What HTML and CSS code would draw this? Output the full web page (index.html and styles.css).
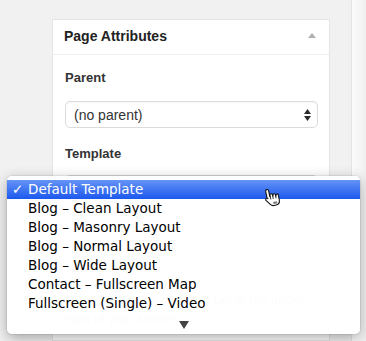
FILE: index.html
```html
<!DOCTYPE html>
<html>
<head>
<meta charset="utf-8">
<link rel="stylesheet" href="styles.css">
</head>
<body>
<div class="page">
  <div class="main">
    <div class="postbox">
      <div class="hndle">
        <h2 class="title">Page Attributes</h2>
        <span class="toggle"></span>
      </div>
      <div class="inside">
        <p class="label label-first">Parent</p>
        <div class="select">
          <span class="value">(no parent)</span>
          <svg class="arrows" width="7" height="12" viewBox="0 0 7 12"><path d="M3.5 0 L7 5 H0 Z M0 7 H7 L3.5 12 Z" fill="#2b2b2b"/></svg>
        </div>
        <p class="label label-second">Template</p>
        <div class="select select-template">
          <span class="value">Default Template</span>
          <svg class="arrows" width="7" height="12" viewBox="0 0 7 12"><path d="M3.5 0 L7 5 H0 Z M0 7 H7 L3.5 12 Z" fill="#2b2b2b"/></svg>
        </div>
        <p class="help">Need help? Use the Help tab in the upper right of your screen.</p>
      </div>
    </div>
  </div>
  <div class="side"></div>
</div>

<div class="menu">
  <div class="item selected"><span class="check">✓</span><span class="text">Default Template</span></div>
  <div class="item"><span class="check"></span><span class="text">Blog – Clean Layout</span></div>
  <div class="item"><span class="check"></span><span class="text">Blog – Masonry Layout</span></div>
  <div class="item"><span class="check"></span><span class="text">Blog – Normal Layout</span></div>
  <div class="item"><span class="check"></span><span class="text">Blog – Wide Layout</span></div>
  <div class="item"><span class="check"></span><span class="text">Contact – Fullscreen Map</span></div>
  <div class="item"><span class="check"></span><span class="text">Fullscreen (Single) – Video</span></div>
  <div class="more"><span class="down"></span></div>
</div>

<svg class="cursor" width="20" height="21" viewBox="0 0 20 21">
  <g transform="rotate(-12 10 10)">
    <path d="M5.5 1.5 C6.4 1.5 7 2.1 7 3 V9 H7.4 V7.6 C7.4 6.9 8 6.4 8.7 6.4 C9.4 6.4 9.9 6.9 9.9 7.6 V9 H10.3 V8.2 C10.3 7.5 10.9 7 11.6 7 C12.3 7 12.8 7.5 12.8 8.2 V9.5 H13.2 V9 C13.2 8.3 13.8 7.8 14.4 7.8 C15.1 7.8 15.6 8.3 15.6 9 V13.5 C15.6 16.2 14.1 18.5 11.6 18.5 H9 C7.5 18.5 6.6 17.8 5.8 16.7 L2.6 12.2 C2.1 11.5 2.3 10.6 2.9 10.2 C3.5 9.8 4.3 10 4.7 10.6 L4 9.6 V3 C4 2.1 4.6 1.5 5.5 1.5 Z" fill="#fff" stroke="#111" stroke-width="1.1" stroke-linejoin="round"/>
    <path d="M9 15 H13 V17 H9 Z" fill="#777"/>
    <path d="M7.4 9 V12 M9.9 9 V12 M12.8 9.5 V12" stroke="#111" stroke-width="0.8"/>
  </g>
</svg>
</body>
</html>
```

FILE: styles.css
```css
html, body {
  margin: 0;
  padding: 0;
}

body {
  background: #f1f1f1;
  width: 366px;
  height: 341px;
  overflow: hidden;
  position: relative;
  font-family: "Liberation Sans", Arial, sans-serif;
  color: #444;
}

.page {
  display: flex;
  height: 341px;
  overflow: hidden;
}

.main {
  width: 351px;
  flex: none;
}

.side {
  flex: 1;
  border-left: 1px solid #e4e4e4;
  background: linear-gradient(to right, #fbfbfb, #f4f4f4 70%, #efefef);
}

.postbox {
  margin: 19px 0 0 52px;
  width: 278px;
  background: #fff;
  border: 1px solid #e5e5e5;
  height: 322px;
  box-sizing: border-box;
  overflow: hidden;
}

.hndle {
  display: flex;
  align-items: center;
  justify-content: space-between;
  padding: 8px 13px 10px 11px;
  border-bottom: 1px solid #eeeeee;
}

.title {
  margin: 0;
  font-size: 14px;
  line-height: 16px;
  font-weight: bold;
  color: #222;
}

.toggle {
  width: 0;
  height: 0;
  border-left: 4px solid transparent;
  border-right: 4px solid transparent;
  border-bottom: 5px solid #b0b0b0;
  margin-top: -1px;
}

.inside {
  padding: 0 11px 0 12px;
}

.label {
  margin: 0;
  font-size: 13px;
  line-height: 15px;
  font-weight: bold;
  color: #333;
}

.label-first {
  margin-top: 15px;
  margin-bottom: 16px;
}

.label-second {
  margin-top: 18px;
  margin-bottom: 14px;
}

.select {
  height: 25px;
  border: 1px solid #dcdcdc;
  border-radius: 5px;
  display: flex;
  align-items: center;
  justify-content: space-between;
  padding: 0 6px 0 8px;
  box-shadow: inset 0 1px 2px rgba(0,0,0,0.04);
}

.value {
  font-size: 14px;
  color: #333;
}

.arrows {
  display: block;
}

.help {
  margin: 88px 0 0 0;
  font-size: 13px;
  line-height: 19px;
  color: #666;
}

.menu {
  position: absolute;
  left: 7px;
  top: 176px;
  width: 353px;
  height: 158px;
  box-sizing: border-box;
  padding-top: 4px;
  background: rgba(255,255,255,0.975);
  border-radius: 5px;
  box-shadow: 0 4px 14px rgba(0,0,0,0.32), 0 0 0 1px rgba(0,0,0,0.06);
  font-family: "DejaVu Sans", "Lucida Grande", sans-serif;
  font-size: 13.5px;
  color: #000;
}

.item {
  display: flex;
  height: 19px;
  line-height: 18px;
  padding-left: 5px;
  white-space: nowrap;
}

.item.selected {
  background: linear-gradient(#6593f5, #1c58ee);
  color: #fff;
}

.check {
  width: 16px;
  flex: none;
  font-weight: bold;
}

.more {
  display: flex;
  justify-content: center;
  padding-top: 8px;
}

.down {
  width: 0;
  height: 0;
  border-left: 5px solid transparent;
  border-right: 5px solid transparent;
  border-top: 8px solid #444;
}

.cursor {
  position: absolute;
  left: 263px;
  top: 187px;
}
```
